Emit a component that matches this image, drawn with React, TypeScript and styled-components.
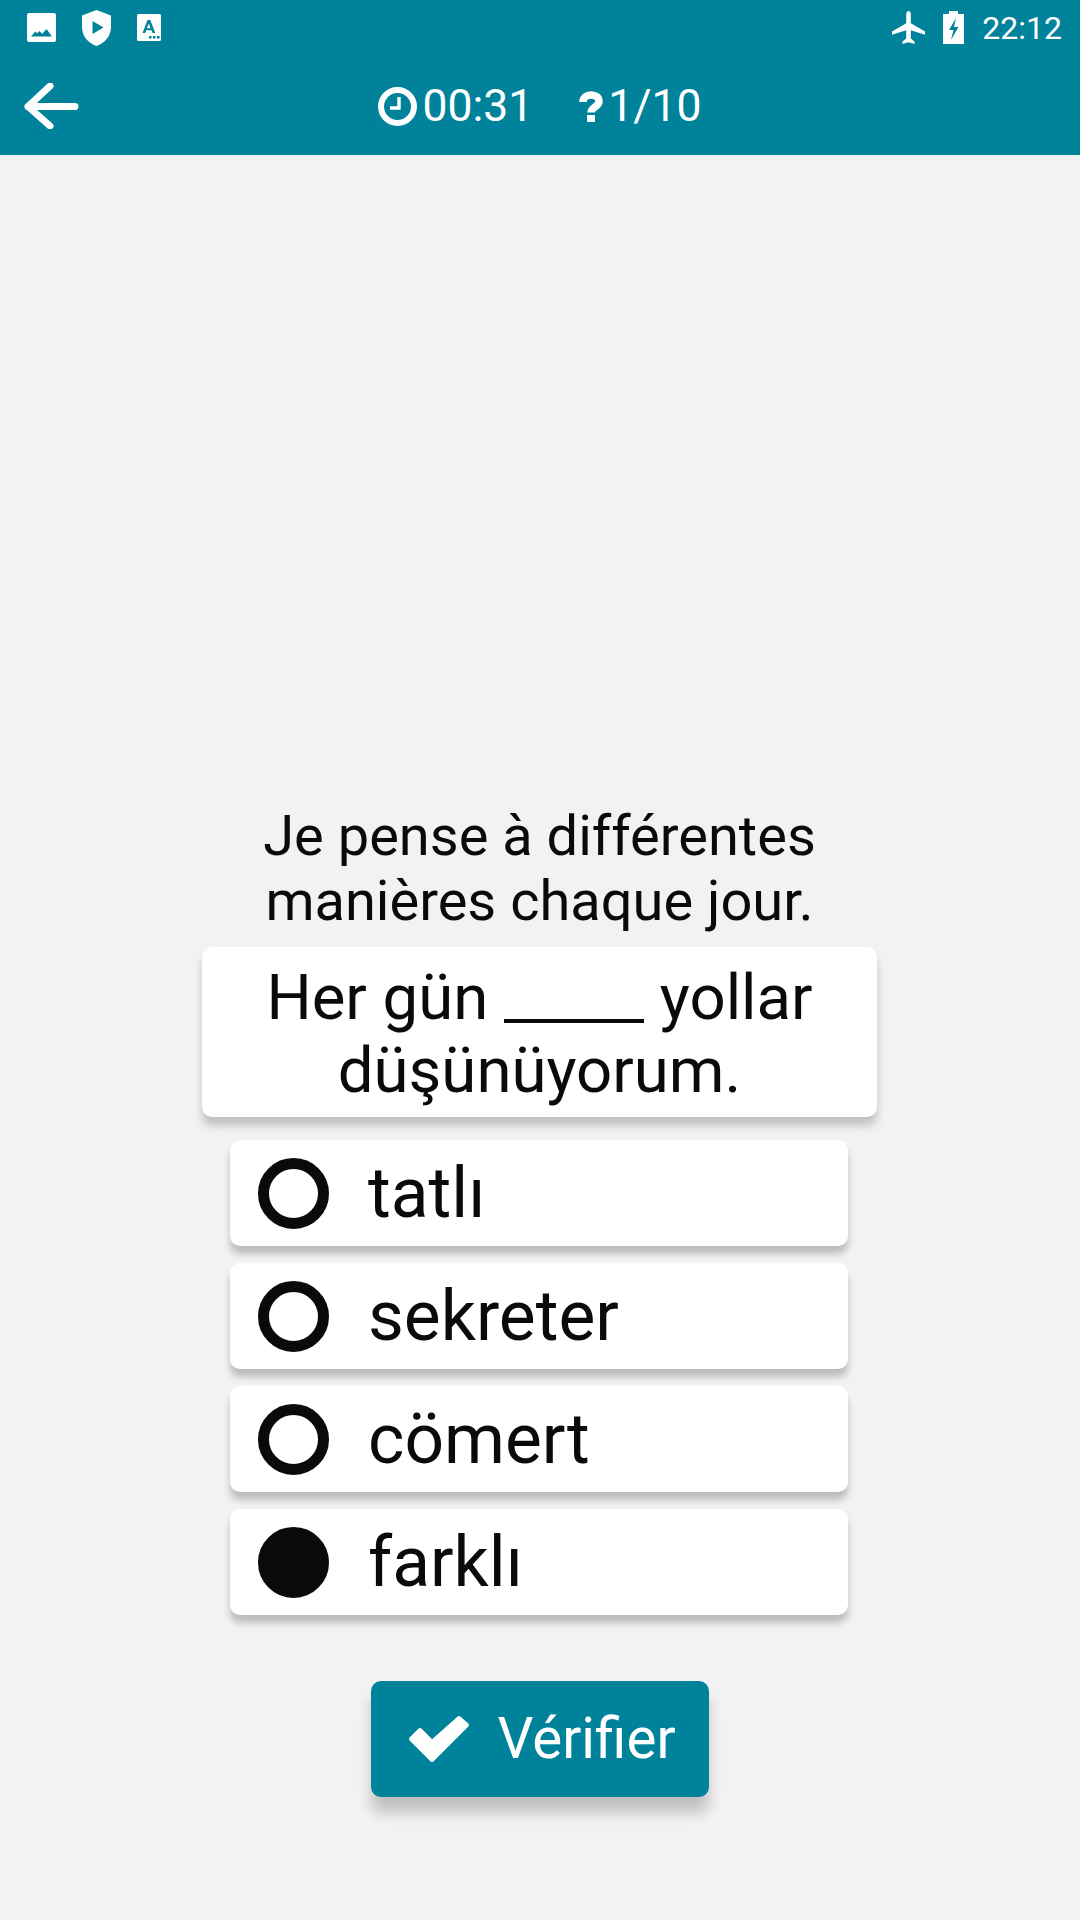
import React from 'react'
import styled, { createGlobalStyle } from 'styled-components'

const GlobalStyle = createGlobalStyle`
  html, body {
    margin: 0;
    padding: 0;
    background: #f2f2f2;
  }
  * {
    box-sizing: border-box;
  }
`

const Page = styled.div`
  width: 1080px;
  height: 1920px;
  display: flex;
  flex-direction: column;
  overflow: hidden;
  background: #f2f2f2;
  color: #0a0a0a;
  font-family: Roboto, 'Liberation Sans', sans-serif;
`

const Header = styled.header`
  height: 155px;
  flex: none;
  background: #00829b;
  color: #fff;
`

const StatusBar = styled.div`
  height: 55px;
  padding: 0 18px 0 27px;
  display: flex;
  align-items: center;
  justify-content: space-between;
`

const StatusGroup = styled.div<{ $gap: number }>`
  display: flex;
  align-items: center;
  gap: ${(p) => p.$gap}px;
`

const StatusTime = styled.span`
  font-size: 32px;
  font-weight: 400;
`

const Toolbar = styled.div`
  height: 100px;
  padding-top: 2px;
  display: grid;
  grid-template-columns: 1fr auto 1fr;
  align-items: center;
`

const BackButton = styled.button`
  width: 56px;
  height: 46px;
  margin-left: 24px;
  padding: 0;
  border: 0;
  background: none;
  color: inherit;
  display: flex;
`

const Counters = styled.div`
  display: flex;
  align-items: center;
  gap: 46px;
`

const Counter = styled.div`
  display: flex;
  align-items: center;
  gap: 5px;
  font-size: 44.5px;
  font-weight: 400;
  line-height: 54px;
`

const Main = styled.main`
  flex: 1;
  display: flex;
  flex-direction: column;
  align-items: center;
  justify-content: flex-end;
  padding: 0 1px 123px 0;
`

const Prompt = styled.p`
  margin: 0 0 13px;
  width: 640px;
  text-align: center;
  font-size: 56px;
  line-height: 65px;
`

const SentenceCard = styled.div`
  width: 675px;
  height: 170px;
  margin-bottom: 23px;
  padding-top: 3px;
  display: flex;
  align-items: center;
  justify-content: center;
  text-align: center;
  background: #fff;
  border-radius: 10px;
  box-shadow: 0 9px 9px rgba(0, 0, 0, 0.2);
  font-size: 63.5px;
  line-height: 73px;
`

const Blank = styled.span`
  display: inline-block;
  width: 140px;
  height: 4px;
  vertical-align: -4px;
  background: #0a0a0a;
`

const Options = styled.div`
  display: flex;
  flex-direction: column;
  gap: 17px;
  margin: 0 1px 66px 0;
`

const Option = styled.div`
  width: 618px;
  height: 106px;
  padding-left: 28px;
  display: flex;
  align-items: center;
  gap: 39px;
  background: #fff;
  border-radius: 10px;
  box-shadow: 0 8px 7px rgba(0, 0, 0, 0.22);
  font-size: 69.5px;
`

const Radio = styled.span<{ $checked: boolean }>`
  width: 71px;
  height: 71px;
  flex: none;
  border-radius: 50%;
  border: 11px solid #0a0a0a;
  background: ${(p) => (p.$checked ? '#0a0a0a' : '#fff')};
`

const CheckButton = styled.button`
  width: 338px;
  height: 116px;
  padding: 0 0 0 37px;
  border: 0;
  display: flex;
  align-items: center;
  gap: 28px;
  background: #00829b;
  color: #fff;
  border-radius: 10px;
  box-shadow: 0 16px 14px rgba(0, 0, 0, 0.2);
  font-family: inherit;
  font-size: 56.5px;
`

const ClockIcon = () => (
  <svg width="39" height="39" viewBox="0 0 39 39" fill="none" stroke="currentColor">
    <circle cx="19.5" cy="19.5" r="16.5" strokeWidth="6" />
    <path d="M21 10v11h-9" strokeWidth="3.4" />
  </svg>
)

const QuestionIcon = () => (
  <svg width="24" height="31" viewBox="0 0 24 31" fill="none">
    <path d="M4 11C4 6.500 7.500 4 12 4c5 0 8 2.500 8 6.500 0 5.500-8 5.500-8 11" stroke="currentColor" strokeWidth="7.500" />
    <rect x="8" y="24" width="8" height="7" fill="currentColor" />
  </svg>
)

const BackArrow = () => (
  <svg width="56" height="46" viewBox="0 0 56 46" fill="none" stroke="currentColor" strokeWidth="7" strokeLinecap="round" strokeLinejoin="round">
    <path d="M26 3 4 23.500 26 43M4 23.500h47" />
  </svg>
)

const CheckIcon = () => (
  <svg width="62" height="48" viewBox="0 0 62 48" fill="currentColor" stroke="currentColor" strokeWidth="4" strokeLinejoin="round">
    <path d="M51 3 59 10 24 45 3 24 12 15 24 27Z" />
  </svg>
)

const PictureIcon = () => (
  <svg width="29" height="29" viewBox="0 0 29 29" fill="currentColor">
    <path fillRule="evenodd" d="M2 0h25a2 2 0 0 1 2 2v25a2 2 0 0 1-2 2H2a2 2 0 0 1-2-2V2a2 2 0 0 1 2-2Zm2 23.500h21l-5.500-7.500-4.300 4.800-2.700-2.800-2.500 2.300-1.700-1.800Z" />
  </svg>
)

const ShieldIcon = () => (
  <svg width="29" height="36" viewBox="0 0 29 36" fill="currentColor">
    <path fillRule="evenodd" d="M14.500 0 29 5.500V17c0 9-6 16-14.500 19C6 33 0 26 0 17V5.500Zm-4 11v13l11-6.500Z" />
  </svg>
)

const FontCardIcon = () => (
  <svg width="24" height="27" viewBox="0 0 24 27" fill="currentColor">
    <path fillRule="evenodd" d="M1.500 0h21A1.500 1.500 0 0 1 24 1.500v24a1.500 1.500 0 0 1-1.500 1.500h-21A1.500 1.500 0 0 1 0 25.500v-24A1.500 1.500 0 0 1 1.500 0ZM10.500 6 5.500 19h2.800l1-2.800h5.200l1 2.800h2.800L13.300 6Zm1.300 3.200 1.800 5h-3.600ZM12 22v2.500h2.500V22Zm4 0v2.500h2.500V22Zm4 0v2.500h2.500V22Z" />
  </svg>
)

const PlaneIcon = () => (
  <svg width="33" height="34" viewBox="0 0 33 34" fill="currentColor">
    <path d="M16.500 0c1.400 0 2.300 1.500 2.300 3.500v8.700L33 20.500v3.200l-14.200-4.400v8.300l3.700 2.800V33l-6-1.700-6 1.700v-2.600l3.700-2.800v-8.300L0 23.700v-3.200l14.200-8.300V3.500c0-2 .9-3.500 2.300-3.500Z" />
  </svg>
)

const BatteryIcon = () => (
  <svg width="21" height="33" viewBox="0 0 21 33" fill="currentColor">
    <path fillRule="evenodd" d="M6 0h9v3h6v30H0V3h6Zm7 7-7 12h4.500L8 29l7.500-13H11Z" />
  </svg>
)

const options = ['tatlı', 'sekreter', 'cömert', 'farklı']

export default function App() {
  return (
    <Page>
      <GlobalStyle />
      <Header>
        <StatusBar>
          <StatusGroup $gap={26}>
            <PictureIcon />
            <ShieldIcon />
            <FontCardIcon />
          </StatusGroup>
          <StatusGroup $gap={18}>
            <PlaneIcon />
            <BatteryIcon />
            <StatusTime>22:12</StatusTime>
          </StatusGroup>
        </StatusBar>
        <Toolbar>
          <BackButton aria-label="Retour">
            <BackArrow />
          </BackButton>
          <Counters>
            <Counter>
              <ClockIcon />
              00:31
            </Counter>
            <Counter>
              <QuestionIcon />
              1/10
            </Counter>
          </Counters>
        </Toolbar>
      </Header>
      <Main>
        <Prompt>Je pense à différentes manières chaque jour.</Prompt>
        <SentenceCard>
          <div>
            Her gün <Blank /> yollar
            <br />
            düşünüyorum.
          </div>
        </SentenceCard>
        <Options>
          {options.map((label) => (
            <Option key={label}>
              <Radio $checked={label === 'farklı'} />
              {label}
            </Option>
          ))}
        </Options>
        <CheckButton>
          <CheckIcon />
          Vérifier
        </CheckButton>
      </Main>
    </Page>
  )
}
